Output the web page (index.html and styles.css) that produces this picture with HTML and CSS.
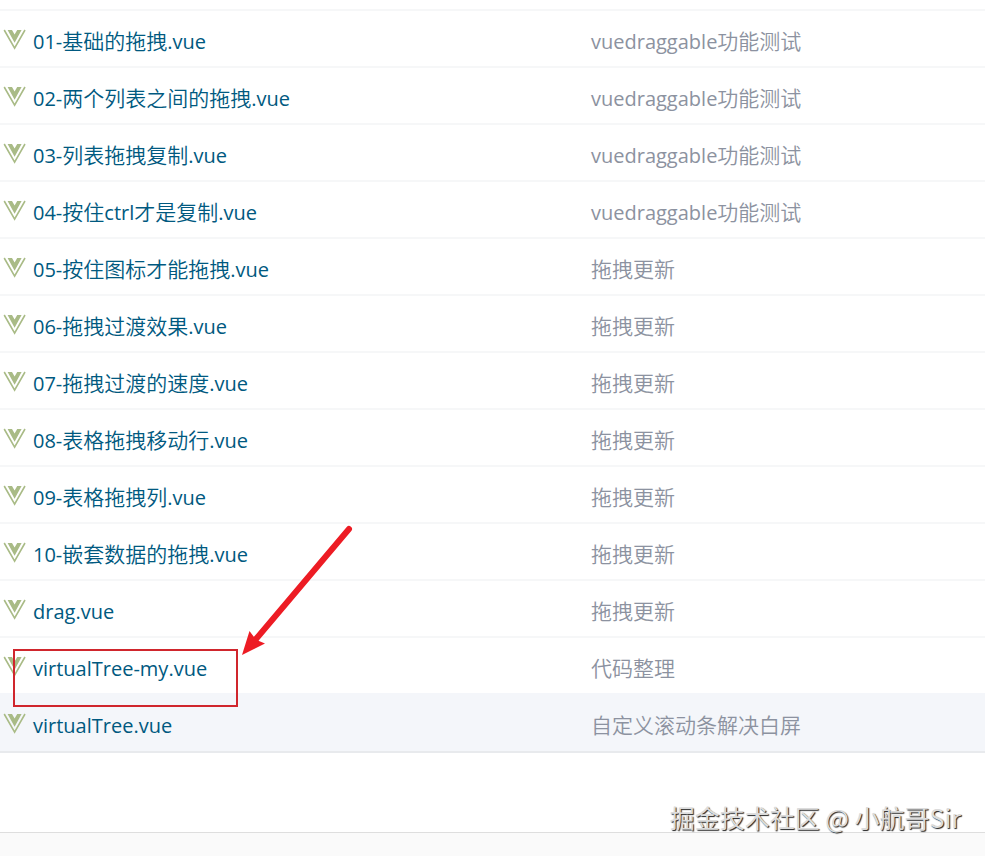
FILE: index.html
```html
<!DOCTYPE html>
<html lang="zh-CN">

<head>
  <meta charset="UTF-8">
  <meta name="viewport" content="width=device-width, initial-scale=1.0">
  <title>vuedraggable</title>
  <link rel="stylesheet" href="styles.css">
</head>

<body>
  <svg class="sprite" aria-hidden="true">
    <symbol id="vue" viewBox="0 0 24 22">
      <path d="M1.2 1L11.600 19.200 22 1" fill="none" stroke="#a9bb86" stroke-width="1.6" />
      <path d="M4.600 1H9L11.600 5.600 14.200 1H18.600L11.600 13.800z" fill="#a9bb86" />
    </symbol>
  </svg>

  <main class="file-list">
    <table class="files">
      <tbody>
        <tr>
          <td class="name"><svg class="icon"><use href="#vue" /></svg><a href="#"><span class="en">01-</span>基础的拖拽<span class="en">.vue</span></a></td>
          <td class="message"><span class="en">vuedraggable</span>功能测试</td>
        </tr>
        <tr>
          <td class="name"><svg class="icon"><use href="#vue" /></svg><a href="#"><span class="en">02-</span>两个列表之间的拖拽<span class="en">.vue</span></a></td>
          <td class="message"><span class="en">vuedraggable</span>功能测试</td>
        </tr>
        <tr>
          <td class="name"><svg class="icon"><use href="#vue" /></svg><a href="#"><span class="en">03-</span>列表拖拽复制<span class="en">.vue</span></a></td>
          <td class="message"><span class="en">vuedraggable</span>功能测试</td>
        </tr>
        <tr>
          <td class="name"><svg class="icon"><use href="#vue" /></svg><a href="#"><span class="en">04-</span>按住<span class="en">ctrl</span>才是复制<span class="en">.vue</span></a></td>
          <td class="message"><span class="en">vuedraggable</span>功能测试</td>
        </tr>
        <tr>
          <td class="name"><svg class="icon"><use href="#vue" /></svg><a href="#"><span class="en">05-</span>按住图标才能拖拽<span class="en">.vue</span></a></td>
          <td class="message">拖拽更新</td>
        </tr>
        <tr>
          <td class="name"><svg class="icon"><use href="#vue" /></svg><a href="#"><span class="en">06-</span>拖拽过渡效果<span class="en">.vue</span></a></td>
          <td class="message">拖拽更新</td>
        </tr>
        <tr>
          <td class="name"><svg class="icon"><use href="#vue" /></svg><a href="#"><span class="en">07-</span>拖拽过渡的速度<span class="en">.vue</span></a></td>
          <td class="message">拖拽更新</td>
        </tr>
        <tr>
          <td class="name"><svg class="icon"><use href="#vue" /></svg><a href="#"><span class="en">08-</span>表格拖拽移动行<span class="en">.vue</span></a></td>
          <td class="message">拖拽更新</td>
        </tr>
        <tr>
          <td class="name"><svg class="icon"><use href="#vue" /></svg><a href="#"><span class="en">09-</span>表格拖拽列<span class="en">.vue</span></a></td>
          <td class="message">拖拽更新</td>
        </tr>
        <tr>
          <td class="name"><svg class="icon"><use href="#vue" /></svg><a href="#"><span class="en">10-</span>嵌套数据的拖拽<span class="en">.vue</span></a></td>
          <td class="message">拖拽更新</td>
        </tr>
        <tr>
          <td class="name"><svg class="icon"><use href="#vue" /></svg><a href="#"><span class="en">drag.vue</span></a></td>
          <td class="message">拖拽更新</td>
        </tr>
        <tr>
          <td class="name"><svg class="icon"><use href="#vue" /></svg><a href="#"><span class="en">virtualTree-my.vue</span></a></td>
          <td class="message">代码整理</td>
        </tr>
        <tr class="active">
          <td class="name"><svg class="icon"><use href="#vue" /></svg><a href="#"><span class="en">virtualTree.vue</span></a></td>
          <td class="message">自定义滚动条解决白屏</td>
        </tr>
      </tbody>
    </table>

    <!-- red box and arrow on virtualTree-my.vue -->
    <svg class="mark" width="360" height="190" viewBox="0 0 360 190" aria-hidden="true">
      <rect x="14" y="130" width="223" height="56" fill="none" stroke="#d0262d" stroke-width="2" />
      <path d="M349 9L256 119" stroke="#ed1c24" stroke-width="6" stroke-linecap="round" />
      <path d="M242 135L249.500 111 254 117 259 121 265 123.500z" fill="#ed1c24" />
    </svg>
  </main>

  <footer class="footer">
    <p class="watermark">掘金技术社区 @ 小航哥Sir</p>
  </footer>
</body>

</html>
```
FILE: styles.css
```css
* {
  box-sizing: border-box;
}

body {
  margin: 0;
  min-height: 100vh;
  display: flex;
  flex-direction: column;
  background-color: #fff;
  font-family: "Open Sans", "Noto Sans CJK SC", sans-serif;
  font-size: 21px;
  line-height: 28px;
}

.sprite {
  position: absolute;
  width: 0;
  height: 0;
}

.file-list {
  position: relative;
  padding-top: 9px;
}

.files {
  width: 100%;
  table-layout: fixed;
  border-spacing: 0;
  border-bottom: 2px solid #e8eaed;
}

.files td {
  height: 57px;
  padding: 16px 0 0;
  border-top: 2px solid #f6f7f8;
  font-weight: 350;
  vertical-align: baseline;
  white-space: nowrap;
}

.files .name {
  width: 60%;
  padding-left: 3px;
}

.files .active td {
  height: 58px;
  background-color: #f4f6fa;
  border-top-color: #f4f6fa;
}

.name a {
  color: #005980;
  text-decoration: none;
}

.name a:hover {
  text-decoration: underline;
}

.message {
  color: #8c92a0;
}

/* latin glyphs run wide next to the chinese ones */
.en {
  font-size: 20px;
  font-weight: 400;
}

.icon {
  width: 24px;
  height: 22px;
  margin-right: 6px;
  vertical-align: -2px;
}

.mark {
  position: absolute;
  left: 0;
  bottom: 43px;
}

.footer {
  position: relative;
  flex: 1;
  margin-top: 79px;
  border-top: 1px solid #dedede;
  background-color: #fafafa;
}

.watermark {
  position: absolute;
  right: 24px;
  bottom: 100%;
  margin: 0 0 -2px;
  color: #dcdcdc;
  font-family: "Noto Sans CJK SC", sans-serif;
  font-size: 25px;
  line-height: 36px;
  text-shadow: 1px 1px 1px #222;
}
```
